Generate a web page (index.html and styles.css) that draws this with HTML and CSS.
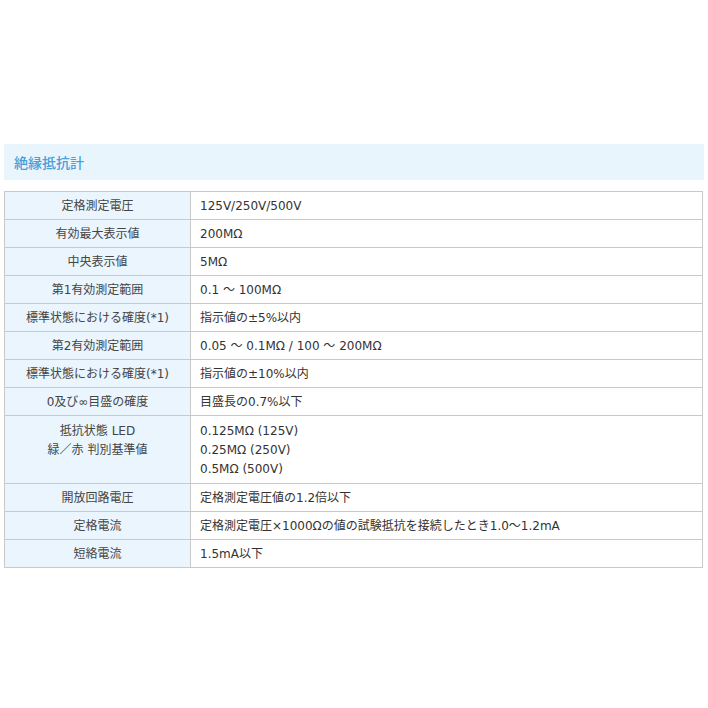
FILE: index.html
```html
<!DOCTYPE html>
<html lang="ja">
<head>
<meta charset="utf-8">
<link rel="stylesheet" href="styles.css">
</head>
<body>
<div class="page">
  <h2 class="title">絶縁抵抗計</h2>
  <table class="spec">
    <tr><th>定格測定電圧</th><td>125V/250V/500V</td></tr>
    <tr><th>有効最大表示値</th><td>200MΩ</td></tr>
    <tr><th>中央表示値</th><td>5MΩ</td></tr>
    <tr><th>第1有効測定範囲</th><td>0.1 ～ 100MΩ</td></tr>
    <tr><th>標準状態における確度(*1)</th><td>指示値の±5%以内</td></tr>
    <tr><th>第2有効測定範囲</th><td>0.05 ～ 0.1MΩ / 100 ～ 200MΩ</td></tr>
    <tr><th>標準状態における確度(*1)</th><td>指示値の±10%以内</td></tr>
    <tr><th>0及び∞目盛の確度</th><td>目盛長の0.7%以下</td></tr>
    <tr class="tall"><th>抵抗状態 LED<br>緑／赤 判別基準値</th><td>0.125MΩ (125V)<br>0.25MΩ (250V)<br>0.5MΩ (500V)</td></tr>
    <tr><th>開放回路電圧</th><td>定格測定電圧値の1.2倍以下</td></tr>
    <tr><th>定格電流</th><td>定格測定電圧×1000Ωの値の試験抵抗を接続したとき1.0～1.2mA</td></tr>
    <tr><th>短絡電流</th><td>1.5mA以下</td></tr>
  </table>
</div>
</body>
</html>
```
FILE: styles.css
```css
html, body {
  margin: 0;
  padding: 0;
  background: #fff;
}
body {
  font-family: "DejaVu Sans", "Noto Sans CJK JP", sans-serif;
  color: #333;
}
.page {
  padding: 144px 4px 0 4px;
}
.title {
  margin: 0;
  height: 36px;
  line-height: 37px;
  padding: 0 10px;
  background: #e8f5fd;
  color: #4a9fd8;
  font-family: "Noto Sans CJK JP", sans-serif;
  font-size: 14px;
  font-weight: 500;
}
.spec {
  margin-top: 11px;
  width: 699px;
  border-collapse: collapse;
  font-size: 12px;
  line-height: 19px;
}
.spec th, .spec td {
  border: 1px solid #c9c9c9;
  padding: 5px 9px 3px;
  vertical-align: top;
}
.spec th {
  width: 167px;
  background: #eaf5fd;
  font-weight: normal;
  text-align: center;
  color: #444;
}
.spec td {
  background: #fff;
  text-align: left;
}
.spec .tall th, .spec .tall td {
  padding-top: 6px;
  padding-bottom: 4px;
}
```
